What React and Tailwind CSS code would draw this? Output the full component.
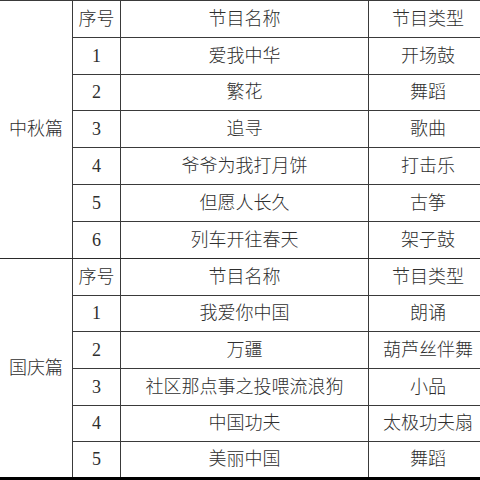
import React from "react";

const autumn = [
  ["1", "爱我中华", "开场鼓"],
  ["2", "繁花", "舞蹈"],
  ["3", "追寻", "歌曲"],
  ["4", "爷爷为我打月饼", "打击乐"],
  ["5", "但愿人长久", "古筝"],
  ["6", "列车开往春天", "架子鼓"],
];

const national = [
  ["1", "我爱你中国", "朗诵"],
  ["2", "万疆", "葫芦丝伴舞"],
  ["3", "社区那点事之投喂流浪狗", "小品"],
  ["4", "中国功夫", "太极功夫扇"],
  ["5", "美丽中国", "舞蹈"],
];

function Section({ title, rows, heights, last }) {
  const all = [["序号", "节目名称", "节目类型"], ...rows];
  return (
    <div
      className={`flex ${
        last ? "border-b-[3px] border-black" : "border-b border-[#2a2a2a]"
      }`}
    >
      <div className="w-[73px] shrink-0 border-r border-[#3a3a3a] flex items-center justify-center">
        {title}
      </div>
      <div className="flex flex-col">
        {all.map((r, i) => (
          <div
            key={i}
            className={`grid grid-cols-[48px_248px_118px] ${heights[i]} ${
              i < all.length - 1 ? "border-b border-[#3a3a3a]" : ""
            }`}
          >
            {r.map((c, j) => (
              <div
                key={j}
                className={`flex items-center justify-center ${
                  j < 2 ? "border-r border-[#3a3a3a]" : ""
                }`}
              >
                {c}
              </div>
            ))}
          </div>
        ))}
      </div>
    </div>
  );
}

export default function App() {
  return (
    <div
      className="w-[480px] h-[480px] overflow-hidden bg-white text-[18px] font-light text-[#2e2e2e]"
      style={{ fontFamily: '"Liberation Serif", "Noto Sans CJK SC", serif' }}
    >
      <div className="w-[487px] border-t border-[#3a3a3a]">
        <Section
          title="中秋篇"
          rows={autumn}
          heights={[
            "h-[37px]",
            "h-[37px]",
            "h-[36px]",
            "h-[37px]",
            "h-[37px]",
            "h-[37px]",
            "h-[36px]",
          ]}
        />
        <Section
          title="国庆篇"
          rows={national}
          last
          heights={[
            "h-[37px]",
            "h-[36px]",
            "h-[37px]",
            "h-[37px]",
            "h-[36px]",
            "h-[35px]",
          ]}
        />
      </div>
    </div>
  );
}
